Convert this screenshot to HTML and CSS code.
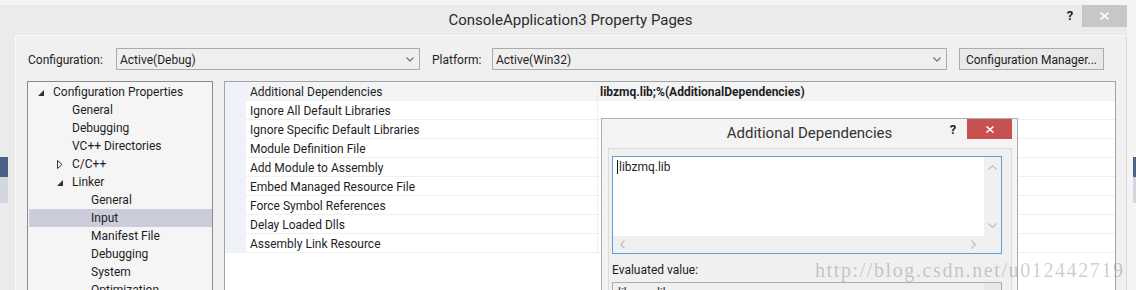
FILE: index.html
```html
<!DOCTYPE html>
<html lang="en">
<head>
  <meta charset="UTF-8">
  <title>ConsoleApplication3 Property Pages</title>
  <link rel="stylesheet" href="styles.css">
</head>
<body>
  <div class="window">
    <div class="titlebar">
      <div class="title">ConsoleApplication3 Property Pages</div>
      <div class="help">?</div>
      <div class="close">
        <svg width="9" height="8" viewBox="0 0 9 8"><path d="M0.5 0.5L8.5 7.5M8.5 0.5L0.5 7.5" stroke="#fff" stroke-width="1.6"/></svg>
      </div>
    </div>

    <div class="panel">
      <div class="config-row">
        <span class="lbl lbl-config">Configuration:</span>
        <div class="combo combo-config">
          <span>Active(Debug)</span>
          <svg width="8" height="5" viewBox="0 0 8 5"><path d="M0.5 0.5L4 4L7.5 0.5" fill="none" stroke="#7a7a7a" stroke-width="1.3"/></svg>
        </div>
        <span class="lbl lbl-platform">Platform:</span>
        <div class="combo combo-platform">
          <span>Active(Win32)</span>
          <svg width="8" height="5" viewBox="0 0 8 5"><path d="M0.5 0.5L4 4L7.5 0.5" fill="none" stroke="#7a7a7a" stroke-width="1.3"/></svg>
        </div>
        <div class="btn">Configuration Manager...</div>
      </div>

      <div class="main">
        <div class="tree">
          <div class="node lvl0"><span class="twisty"><svg width="6" height="6" viewBox="0 0 6 6"><path d="M6 0V6H0Z" fill="#333"/></svg></span>Configuration Properties</div>
          <div class="node lvl1"><span class="twisty"></span>General</div>
          <div class="node lvl1"><span class="twisty"></span>Debugging</div>
          <div class="node lvl1"><span class="twisty"></span>VC++ Directories</div>
          <div class="node lvl1"><span class="twisty"><svg width="6" height="9" viewBox="0 0 6 9"><path d="M0.5 0.5L5 4.5L0.5 8.5Z" fill="none" stroke="#333"/></svg></span>C/C++</div>
          <div class="node lvl1"><span class="twisty"><svg width="6" height="6" viewBox="0 0 6 6"><path d="M6 0V6H0Z" fill="#333"/></svg></span>Linker</div>
          <div class="node lvl2"><span class="twisty"></span>General</div>
          <div class="node lvl2 selected"><span class="twisty"></span>Input</div>
          <div class="node lvl2"><span class="twisty"></span>Manifest File</div>
          <div class="node lvl2"><span class="twisty"></span>Debugging</div>
          <div class="node lvl2"><span class="twisty"></span>System</div>
          <div class="node lvl2"><span class="twisty"></span>Optimization</div>
        </div>

        <div class="grid">
          <div class="prow current"><span class="gutter"></span><span class="pname">Additional Dependencies</span><span class="pvalue bold">libzmq.lib;%(AdditionalDependencies)</span></div>
          <div class="prow"><span class="gutter"></span><span class="pname">Ignore All Default Libraries</span><span class="pvalue"></span></div>
          <div class="prow"><span class="gutter"></span><span class="pname">Ignore Specific Default Libraries</span><span class="pvalue"></span></div>
          <div class="prow"><span class="gutter"></span><span class="pname">Module Definition File</span><span class="pvalue"></span></div>
          <div class="prow"><span class="gutter"></span><span class="pname">Add Module to Assembly</span><span class="pvalue"></span></div>
          <div class="prow"><span class="gutter"></span><span class="pname">Embed Managed Resource File</span><span class="pvalue"></span></div>
          <div class="prow"><span class="gutter"></span><span class="pname">Force Symbol References</span><span class="pvalue"></span></div>
          <div class="prow"><span class="gutter"></span><span class="pname">Delay Loaded Dlls</span><span class="pvalue"></span></div>
          <div class="prow"><span class="gutter"></span><span class="pname">Assembly Link Resource</span><span class="pvalue"></span></div>
        </div>
      </div>
    </div>
  </div>

  <!-- bits of the IDE window behind -->
  <div class="behind behind-left"></div>
  <div class="behind behind-right"></div>

  <div class="dialog">
    <div class="dlg-titlebar">
      <div class="dlg-title">Additional Dependencies</div>
      <div class="dlg-help">?</div>
      <div class="dlg-close">
        <svg width="8" height="7" viewBox="0 0 8 7"><path d="M0.5 0.5L7.5 6.5M7.5 0.5L0.5 6.5" stroke="#fff" stroke-width="1.5"/></svg>
      </div>
    </div>
    <div class="dlg-body">
      <div class="editor">
        <div class="editor-main">
          <div class="editor-text"><span class="caret"></span>libzmq.lib</div>
          <div class="vscroll">
            <svg width="9" height="5" viewBox="0 0 9 5"><path d="M0.5 4.5L4.5 0.8L8.5 4.5" fill="none" stroke="#c4c4c4" stroke-width="1.5"/></svg>
            <svg width="9" height="5" viewBox="0 0 9 5"><path d="M0.5 0.5L4.5 4.2L8.5 0.5" fill="none" stroke="#c4c4c4" stroke-width="1.5"/></svg>
          </div>
        </div>
        <div class="hscroll">
          <svg width="5" height="9" viewBox="0 0 5 9"><path d="M4.5 0.5L0.8 4.5L4.5 8.5" fill="none" stroke="#c4c4c4" stroke-width="1.5"/></svg>
          <svg width="5" height="9" viewBox="0 0 5 9"><path d="M0.5 0.5L4.2 4.5L0.5 8.5" fill="none" stroke="#c4c4c4" stroke-width="1.5"/></svg>
        </div>
      </div>
      <div class="eval-label">Evaluated value:</div>
      <div class="eval-box">
        <span class="eval-text">libzmq.lib</span>
        <div class="eval-scroll"></div>
      </div>
    </div>
  </div>

  <div class="watermark">http://blog.csdn.net/u012442719</div>
</body>
</html>
```

FILE: styles.css
```css
* { box-sizing: border-box; }
body { margin: 0; height: 290px; overflow: hidden; position: relative; background: #f4f4f4; font-family: Roboto, "Noto Sans", sans-serif; font-size: 12px; color: #1e1e1e; }

/* main property pages window */
.window { margin-top: 5px; width: 1127px; height: 285px; background: #ebebeb; display: flex; flex-direction: column; }
.titlebar { height: 30px; display: flex; align-items: flex-start; }
.title { flex: 1; text-align: center; padding-left: 79px; font-size: 15px; line-height: 31px; color: #2b2b2b; }
.help { width: 16px; margin-right: 4px; font-size: 13px; font-weight: bold; line-height: 22px; text-align: center; color: #222; }
.close { width: 45px; height: 22px; background: #c7c7c7; display: flex; align-items: center; justify-content: center; }

.panel { flex: 1; margin-left: 15px; background: #f0f0f0; border-top: 1px solid #fafafa; border-left: 1px solid #fafafa; border-right: 1px solid #dcdcdc; padding: 12px 0 0 12px; }

.config-row { display: flex; align-items: center; height: 22px; }
.lbl { padding-top: 1px; }
.lbl-config { width: 88px; }
.lbl-platform { width: 60px; margin-left: 12px; }
.combo { height: 22px; border: 1px solid #acacac; background: #efefef; padding: 1px 5px 0 3px; display: flex; align-items: center; justify-content: space-between; }
.combo-config { width: 304px; }
.combo-platform { width: 455px; }
.btn { margin-left: 12px; width: 145px; height: 22px; border: 1px solid #acacac; background: #e9e9e9; padding-top: 1px; display: flex; align-items: center; justify-content: center; }

.main { display: flex; gap: 11px; margin-top: 11px; margin-left: -1px; }

.tree { width: 186px; height: 220px; border: 1px solid #8a8b92; background: #f5f5f5; padding: 1px 0 0 1px; }
.node { height: 18px; display: flex; align-items: center; white-space: nowrap; }
.node.lvl0 { padding-left: 9px; }
.node.lvl1 { padding-left: 28px; }
.node.lvl2 { padding-left: 47px; }
.node.selected { background: #cbcdda; }
.twisty { width: 15px; height: 18px; display: flex; align-items: center; }
.twisty svg { margin-top: 1px; }

.grid { width: 892px; height: 220px; border: 1px solid #a3a3a3; background: #fff; }
.prow { height: 19px; display: flex; }
.gutter { width: 21px; background: #eff3f9; }
.pname { width: 352px; padding: 2px 0 0 4px; line-height: 16px; border-right: 1px solid #eceef1; border-bottom: 1px solid #edf0f3; white-space: nowrap; }
.pvalue { flex: 1; padding: 2px 0 0 2px; line-height: 16px; border-bottom: 1px solid #edf0f3; white-space: nowrap; }
.prow.current .pname, .prow.current .pvalue { background: #f3f4f6; }
.bold { font-weight: bold; }

.behind { position: absolute; top: 157px; height: 46px; width: 8px; background: linear-gradient(#4b6187 0 20px, #d3d5df 20px); }
.behind-left { left: 0; }
.behind-right { right: 0; width: 3px; }

/* additional dependencies dialog */
.dialog { position: absolute; left: 601px; top: 118px; width: 417px; height: 200px; border: 1px solid #adadad; background: #f4f4f4; }
.dlg-titlebar { height: 29px; display: flex; align-items: flex-start; }
.dlg-title { flex: 1; padding-left: 71px; text-align: center; font-size: 15px; line-height: 29px; color: #333; }
.dlg-help { width: 14px; margin-right: 7px; font-size: 13px; font-weight: bold; line-height: 22px; text-align: center; color: #222; }
.dlg-close { width: 45px; height: 20px; margin-right: 5px; background: #c75050; display: flex; align-items: center; justify-content: center; }

.dlg-body { margin-left: 6px; width: 404px; height: 180px; border: 1px solid #dcdcdc; background: #f0f0f0; padding: 7px 0 0 3px; }
.editor { width: 390px; height: 98px; border: 1px solid #5d9ee0; background: #f0f0f0; }
.editor-main { height: 79px; display: flex; }
.editor-text { flex: 1; background: #fff; padding: 3px 0 0 4px; line-height: 15px; display: flex; align-items: flex-start; }
.caret { width: 1px; height: 14px; background: #111; margin-right: 1px; }
.vscroll { width: 17px; display: flex; flex-direction: column; justify-content: space-between; align-items: center; padding: 8px 0 8px; }
.hscroll { height: 17px; width: 371px; display: flex; justify-content: space-between; align-items: center; padding: 0 8px 0 7px; }

.eval-label { margin-top: 8px; line-height: 16px; }
.eval-box { margin-top: 4px; width: 390px; height: 30px; border: 1px solid #acacac; background: #f0f0f0; display: flex; }
.eval-text { flex: 1; padding: 3px 0 0 5px; }
.eval-scroll { width: 17px; background: #e8e8e8; }

.watermark { position: absolute; left: 815px; top: 260px; font-family: "Liberation Serif", serif; font-size: 20px; line-height: 20px; letter-spacing: 1.6px; color: rgba(100, 100, 100, 0.33); white-space: nowrap; }
```
